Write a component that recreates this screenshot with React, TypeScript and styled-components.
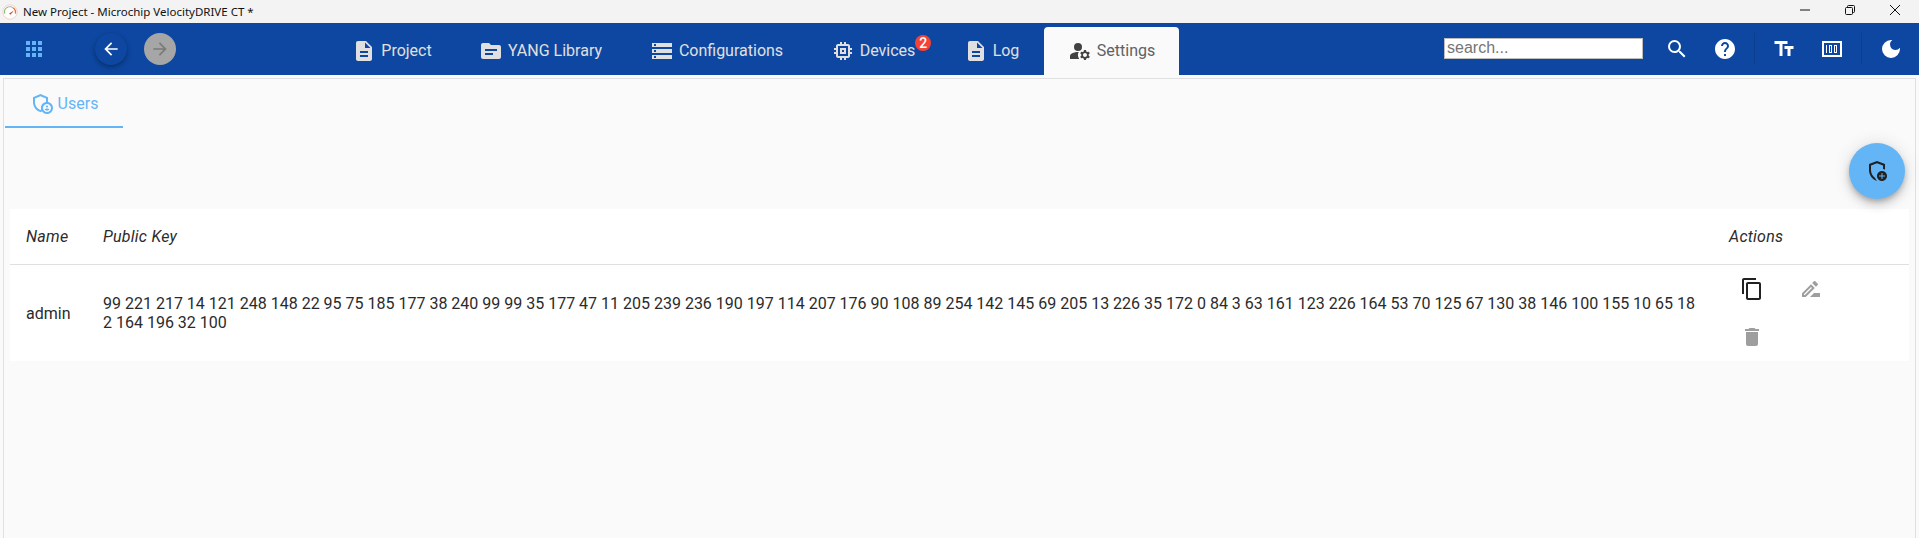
import React from 'react';
import styled, { createGlobalStyle } from 'styled-components';
import {
    MdApps,
    MdArrowBack,
    MdArrowForward,
    MdContentCopy,
    MdDarkMode,
    MdDelete,
    MdDescription,
    MdHelp,
    MdManageAccounts,
    MdMemory,
    MdOutlineAddModerator,
    MdOutlineAdminPanelSettings,
    MdOutlineDriveFileRenameOutline,
    MdSearch,
    MdStorage,
    MdTextFields,
    MdTopic,
} from 'react-icons/md';

const PUBLIC_KEY =
    '99 221 217 14 121 248 148 22 95 75 185 177 38 240 99 99 35 177 47 11 205 239 236 190 197 114 207 176 90 108 89 254 142 145 69 205 13 226 35 172 0 84 3 63 161 123 226 164 53 70 125 67 130 38 146 100 155 10 65 182 164 196 32 100';

const GlobalStyle = createGlobalStyle`
    html, body {
        margin: 0;
        padding: 0;
        height: 100%;
        overflow: hidden;
        background: #fafafa;
        font-family: Roboto, 'Liberation Sans', sans-serif;
    }
    #root {
        height: 100%;
    }
`;

const AppLogo = () => (
    <svg width="16" height="16" viewBox="0 0 16 16" fill="none">
        <circle cx="8" cy="8" r="7.2" fill="#fff" stroke="#f3c9bd" strokeWidth="0.8" />
        <path d="M2.6 9.6A5.6 5.6 0 0 1 6 3" stroke="#8bbf7a" strokeWidth="1.3" />
        <path d="M6 3a5.6 5.6 0 0 1 5 .8" stroke="#bdbdbd" strokeWidth="1.3" />
        <path d="M11 3.8a5.6 5.6 0 0 1 2.4 5.8" stroke="#e2703a" strokeWidth="1.3" />
        <path d="M7.2 9.6 12 6.4 8.4 10.8z" fill="#b5452c" />
    </svg>
);

const ZoomIcon = () => (
    <svg width="24" height="24" viewBox="0 0 24 24" fill="none">
        <rect x="3" y="5" width="18" height="14" stroke="#fff" strokeWidth="2" />
        <path d="M6.5 8v8" stroke="#fff" />
        <rect x="9.5" y="8.5" width="2" height="7" stroke="#fff" />
        <rect x="14.5" y="8.5" width="2" height="7" stroke="#fff" />
    </svg>
);

const App = () => (
    <Page>
        <GlobalStyle />
        <TitleBar>
            <TitleLeft>
                <AppLogo />
                <TitleText>New Project - Microchip VelocityDRIVE CT *</TitleText>
            </TitleLeft>
            <WindowControls>
                <svg width="10" height="10" viewBox="0 0 10 10">
                    <path d="M0 5h10" stroke="#111" strokeWidth="1" />
                </svg>
                <svg width="10" height="10" viewBox="0 0 10 10" fill="none" stroke="#111">
                    <rect x="0.5" y="2.5" width="7" height="7" rx="1" />
                    <path d="M2.5 2.5V1.5a1 1 0 0 1 1-1h5a1 1 0 0 1 1 1v5a1 1 0 0 1-1 1h-1" />
                </svg>
                <svg width="10" height="10" viewBox="0 0 10 10">
                    <path d="M0 0l10 10M10 0 0 10" stroke="#111" strokeWidth="1" />
                </svg>
            </WindowControls>
        </TitleBar>
        <NavBar>
            <LeftGroup>
                <AppsButton>
                    <MdApps size={24} />
                </AppsButton>
                <RoundButton>
                    <MdArrowBack size={20} />
                </RoundButton>
                <RoundButton disabled>
                    <MdArrowForward size={20} />
                </RoundButton>
            </LeftGroup>
            <Tabs>
                <Tab $width={126}>
                    <MdDescription size={24} />
                    <TabLabel>Project</TabLabel>
                </Tab>
                <Tab $width={171}>
                    <MdTopic size={24} />
                    <TabLabel>YANG Library</TabLabel>
                </Tab>
                <Tab $width={181}>
                    <MdStorage size={24} />
                    <TabLabel>Configurations</TabLabel>
                </Tab>
                <Tab $width={132}>
                    <MdMemory size={24} />
                    <TabLabel>
                        Devices
                        <Badge>2</Badge>
                    </TabLabel>
                </Tab>
                <Tab $width={105}>
                    <MdDescription size={24} />
                    <TabLabel>Log</TabLabel>
                </Tab>
                <Tab $width={135} $active>
                    <MdManageAccounts size={24} />
                    <TabLabel>Settings</TabLabel>
                </Tab>
            </Tabs>
            <RightGroup>
                <SearchInput placeholder="search..." />
                <ToolIcon $left={22}>
                    <MdSearch size={24} />
                </ToolIcon>
                <ToolIcon $left={24}>
                    <MdHelp size={24} />
                </ToolIcon>
                <Divider />
                <ToolIcon $left={17}>
                    <MdTextFields size={24} />
                </ToolIcon>
                <ToolIcon $left={24}>
                    <ZoomIcon />
                </ToolIcon>
                <Divider />
                <ToolIcon $left={17}>
                    <MdDarkMode size={24} />
                </ToolIcon>
            </RightGroup>
        </NavBar>
        <Content>
            <SubTabs>
                <SubTab>
                    <MdOutlineAdminPanelSettings size={24} />
                    <SubTabLabel>Users</SubTabLabel>
                </SubTab>
            </SubTabs>
            <FabRow>
                <Fab>
                    <MdOutlineAddModerator size={24} />
                </Fab>
            </FabRow>
            <Table>
                <thead>
                    <tr>
                        <HeadCell $width={77}>Name</HeadCell>
                        <HeadCell>Public Key</HeadCell>
                        <HeadCell $width={196}>Actions</HeadCell>
                    </tr>
                </thead>
                <tbody>
                    <tr>
                        <BodyCell>admin</BodyCell>
                        <KeyCell>{PUBLIC_KEY}</KeyCell>
                        <BodyCell>
                            <Actions>
                                <ActionButton>
                                    <MdContentCopy size={24} />
                                </ActionButton>
                                <ActionButton $muted>
                                    <MdOutlineDriveFileRenameOutline size={24} />
                                </ActionButton>
                                <ActionButton $muted>
                                    <MdDelete size={24} />
                                </ActionButton>
                            </Actions>
                        </BodyCell>
                    </tr>
                </tbody>
            </Table>
        </Content>
    </Page>
);

const Page = styled.div`
    height: 538px;
    display: flex;
    flex-direction: column;
    background: #fafafa;
`;

const TitleBar = styled.div`
    height: 23px;
    flex: none;
    display: flex;
    align-items: center;
    justify-content: space-between;
    background: #f3f3f3;
`;

const TitleLeft = styled.div`
    display: flex;
    align-items: center;
    gap: 5px;
    padding-left: 2px;
`;

const TitleText = styled.span`
    font-family: 'Noto Sans', 'Liberation Sans', sans-serif;
    font-size: 11.5px;
    color: #111;
`;

const WindowControls = styled.div`
    display: flex;
    align-items: center;
    gap: 35px;
    padding: 0 19px 3px 0;
`;

const NavBar = styled.div`
    height: 52px;
    flex: none;
    display: flex;
    align-items: flex-end;
    background: #0d47a1;
`;

const LeftGroup = styled.div`
    width: 329px;
    height: 52px;
    flex: none;
    display: flex;
    align-items: center;
    gap: 17px;
    padding-left: 22px;
    box-sizing: border-box;
`;

const AppsButton = styled.div`
    display: flex;
    width: 24px;
    margin-right: 32px;
    color: #64b5f6;
`;

const RoundButton = styled.button`
    width: 32px;
    height: 32px;
    padding: 0;
    border: none;
    border-radius: 50%;
    display: flex;
    align-items: center;
    justify-content: center;
    color: ${props => (props.disabled ? '#7a7a7a' : '#fff')};
    background: ${props => (props.disabled ? '#a6a6a6' : '#0d47a1')};
    box-shadow: ${props => (props.disabled ? 'none' : '0 2px 5px rgba(0, 0, 0, 0.35)')};
`;

const Tabs = styled.div`
    display: flex;
    align-items: flex-end;
    height: 48px;
`;

const Tab = styled.div<{ $width: number; $active?: boolean }>`
    width: ${props => props.$width}px;
    height: 48px;
    box-sizing: border-box;
    display: flex;
    align-items: center;
    justify-content: center;
    gap: 5px;
    font-size: 16px;
    border-radius: 4px 4px 0 0;
    color: ${props => (props.$active ? '#616161' : '#e0e0e0')};
    background: ${props => (props.$active ? '#fafafa' : 'transparent')};
    svg {
        color: ${props => (props.$active ? '#424242' : '#e0e0e0')};
    }
`;

const TabLabel = styled.span`
    position: relative;
    margin-bottom: 2px;
`;

const Badge = styled.span`
    position: absolute;
    top: -6px;
    right: -16px;
    width: 16px;
    height: 16px;
    border-radius: 50%;
    background: #f44336;
    color: #fff;
    font-size: 14px;
    font-weight: 500;
    line-height: 16px;
    text-align: center;
`;

const RightGroup = styled.div`
    height: 52px;
    margin-left: auto;
    padding-right: 16px;
    display: flex;
    align-items: center;
`;

const SearchInput = styled.input`
    width: 199px;
    height: 21px;
    box-sizing: border-box;
    margin-bottom: 2px;
    padding: 1px 2px;
    border: 1px solid #bdbdbd;
    background: #fff;
    font-family: 'Liberation Sans', sans-serif;
    font-size: 16px;
    outline: none;
    &::placeholder {
        color: #757575;
    }
`;

const ToolIcon = styled.div<{ $left: number }>`
    display: flex;
    margin-left: ${props => props.$left}px;
    color: #fff;
`;

const Divider = styled.div`
    width: 1px;
    height: 32px;
    margin-left: 17px;
    background: rgba(0, 0, 0, 0.12);
`;

const Content = styled.div`
    flex: 1;
    margin: 3px 3px 0;
    padding: 0 6px;
    border: 1px solid #e0e0e0;
    border-bottom: none;
    background: #fafafa;
`;

const SubTabs = styled.div`
    display: flex;
    margin-left: -5px;
`;

const SubTab = styled.div`
    width: 118px;
    height: 49px;
    box-sizing: border-box;
    display: flex;
    align-items: center;
    justify-content: center;
    gap: 4px;
    font-size: 16px;
    color: #64b5f6;
    border-bottom: 2px solid #64b5f6;
`;

const SubTabLabel = styled.span`
    margin-top: 2px;
`;

const FabRow = styled.div`
    height: 81px;
    display: flex;
    justify-content: flex-end;
    padding: 15px 4px 0 0;
    box-sizing: border-box;
`;

const Fab = styled.div`
    width: 56px;
    height: 56px;
    border-radius: 50%;
    display: flex;
    align-items: center;
    justify-content: center;
    color: #212121;
    background: #64b5f6;
    box-shadow: 0 3px 5px -1px rgba(0, 0, 0, 0.2), 0 6px 10px 0 rgba(0, 0, 0, 0.14), 0 1px 18px 0 rgba(0, 0, 0, 0.12);
`;

const Table = styled.table`
    width: 100%;
    border-collapse: collapse;
    table-layout: fixed;
    background: #fff;
    font-size: 16px;
    color: #2b2b2b;
`;

const HeadCell = styled.th<{ $width?: number }>`
    width: ${props => (props.$width ? `${props.$width}px` : 'auto')};
    height: 55px;
    box-sizing: border-box;
    padding: 0 16px;
    text-align: left;
    font-style: italic;
    font-weight: 400;
    letter-spacing: 0.25px;
    border-bottom: 1px solid #e0e0e0;
`;

const BodyCell = styled.td`
    box-sizing: border-box;
    padding: 1px 16px 0;
    height: 97px;
`;

const KeyCell = styled(BodyCell)`
    line-height: 19px;
    word-break: break-all;
`;

const Actions = styled.div`
    display: grid;
    grid-template-columns: 24px 24px;
    column-gap: 35px;
    row-gap: 24px;
    margin-left: 11px;
`;

const ActionButton = styled.div<{ $muted?: boolean }>`
    display: flex;
    align-items: center;
    justify-content: center;
    height: 24px;
    color: ${props => (props.$muted ? '#9e9e9e' : '#212121')};
`;

export default App;
